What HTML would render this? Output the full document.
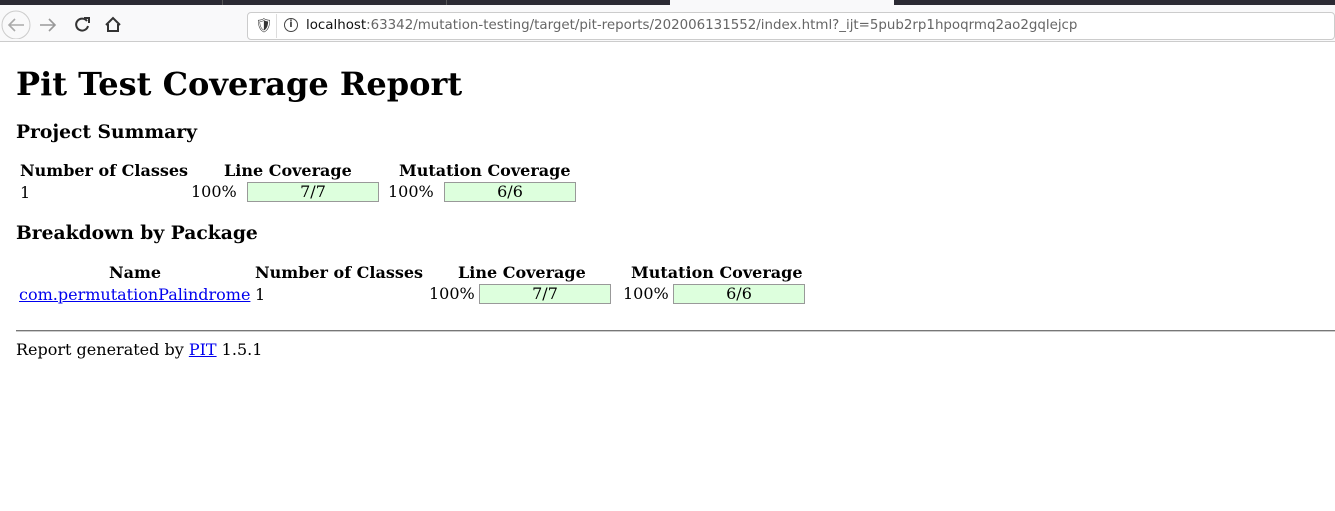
<!DOCTYPE html>
<html><head><style>
body{margin:0;width:1335px;height:511px;background:#fff;position:relative;font-family:"DejaVu Serif",serif;color:#000;overflow:hidden}
.a{position:absolute;white-space:nowrap}
.b{font-weight:bold;font-size:16px}
.t{font-size:16px}
.bar{position:absolute;background:#ddffdd;border:1px solid #999;height:20px;box-sizing:border-box;text-align:center;font-size:16px;line-height:18px}
a{color:#00e}
</style></head><body>
<div class="a" style="left:0;top:0;width:1335px;height:5px;background:#2b2a33"></div>
<div class="a" style="left:222px;top:0;width:1px;height:5px;background:#555"></div>
<div class="a" style="left:446px;top:0;width:1px;height:5px;background:#555"></div>
<div class="a" style="left:670px;top:0;width:224px;height:5px;background:#f9f9fa"></div>
<div class="a" style="left:0;top:5px;width:1335px;height:36px;background:#f9f9fa;border-bottom:1px solid #ccc"></div>
<svg class="a" style="left:0;top:9px" width="130" height="30" viewBox="0 0 130 30">
<circle cx="16" cy="16" r="14" fill="none" stroke="#ccc"/>
<path d="M24 16H9M15 10l-6 6 6 6" stroke="#aaa" stroke-width="1.6" fill="none"/>
<path d="M40 16h15M49 10l6 6-6 6" stroke="#999" stroke-width="1.6" fill="none"/>
<path d="M87 12a6 6 0 1 0 1 5" stroke="#333" stroke-width="2" fill="none"/><path d="M84 9h5v5" stroke="#333" stroke-width="2" fill="none"/>
<path d="M106 16l7-7 7 7M108 15v7h10v-7" stroke="#333" stroke-width="2" fill="none"/>
</svg>
<div class="a" style="left:247px;top:12px;width:1088px;height:28px;background:#fff;border:1px solid #ccc;border-radius:4px;box-sizing:border-box"></div>
<div class="a" style="left:255px;top:18px;font:14px 'DejaVu Sans',sans-serif;color:#333">🛡</div>
<div class="a" style="left:276px;top:14px;width:1px;height:24px;background:#ddd"></div>
<div class="a" style="left:284px;top:18px;width:12px;height:12px;border:1.5px solid #444;border-radius:50%;font:bold 10px 'DejaVu Sans';text-align:center;line-height:12px;color:#444">i</div>
<div class="a" style="left:306px;top:18px;font:13.4px 'DejaVu Sans',sans-serif;color:#666"><span style="color:#111">localhost</span>:63342/mutation-testing/target/pit-reports/202006131552/index.html?_ijt=5pub2rp1hpoqrmq2ao2gqlejcp</div>

<div class="a" style="left:16px;top:65px;font-weight:bold;font-size:32px">Pit Test Coverage Report</div>
<div class="a" style="left:16px;top:121px;font-weight:bold;font-size:18.7px">Project Summary</div>
<div class="a b" style="left:20px;top:161px">Number of Classes</div>
<div class="a b" style="left:224px;top:161px">Line Coverage</div>
<div class="a b" style="left:399px;top:161px">Mutation Coverage</div>
<div class="a t" style="left:20px;top:183px">1</div>
<div class="a t" style="left:191px;top:182px">100%</div>
<div class="bar" style="left:247px;top:182px;width:132px">7/7</div>
<div class="a t" style="left:388px;top:182px">100%</div>
<div class="bar" style="left:444px;top:182px;width:132px">6/6</div>

<div class="a" style="left:16px;top:222px;font-weight:bold;font-size:18.7px">Breakdown by Package</div>
<div class="a b" style="left:109px;top:263px">Name</div>
<div class="a b" style="left:255px;top:263px">Number of Classes</div>
<div class="a b" style="left:458px;top:263px">Line Coverage</div>
<div class="a b" style="left:631px;top:263px">Mutation Coverage</div>
<div class="a t" style="left:19px;top:285px"><a href="#">com.permutationPalindrome</a></div>
<div class="a t" style="left:255px;top:285px">1</div>
<div class="a t" style="left:429px;top:284px">100%</div>
<div class="bar" style="left:479px;top:284px;width:132px">7/7</div>
<div class="a t" style="left:623px;top:284px">100%</div>
<div class="bar" style="left:673px;top:284px;width:132px">6/6</div>

<div class="a" style="left:16px;top:330px;width:1319px;height:0;border-top:1px solid #777;border-bottom:1px solid #ccc"></div>
<div class="a t" style="left:16px;top:340px">Report generated by <a href="#">PIT</a> 1.5.1</div>
</body></html>
